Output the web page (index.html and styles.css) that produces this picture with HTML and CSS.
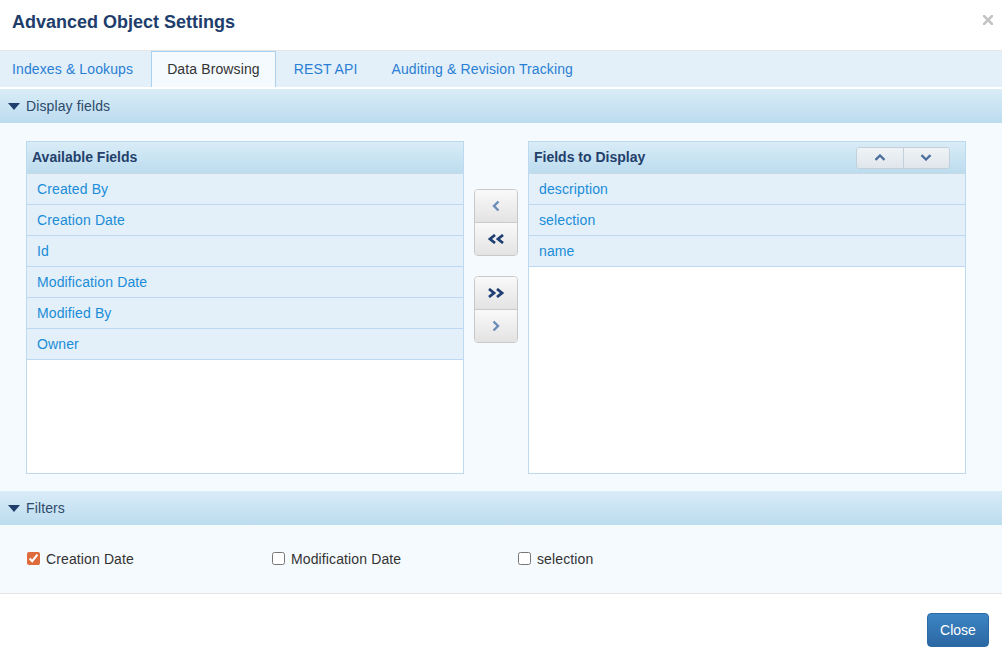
FILE: index.html
```html
<!DOCTYPE html>
<html>
<head>
<meta charset="utf-8">
<link rel="stylesheet" href="styles.css">
</head>
<body>
<div class="modal">
  <div class="modal-header">
    <h4 class="title">Advanced Object Settings</h4>
    <span class="close"><svg width="10" height="10" viewBox="0 0 10 10"><path d="M1 1L9 9M9 1L1 9" stroke="#c4c4c4" stroke-width="2.6" stroke-linecap="square"/></svg></span>
  </div>
  <ul class="tabs">
    <li class="tab">Indexes &amp; Lookups</li>
    <li class="tab active">Data Browsing</li>
    <li class="tab">REST API</li>
    <li class="tab">Auditing &amp; Revision Tracking</li>
  </ul>

  <div class="section-head">
    <svg class="caret" width="12" height="7" viewBox="0 0 12 7"><polygon points="0,0 12,0 6,7" fill="#1f3e6c"/></svg>
    <span>Display fields</span>
  </div>
  <div class="panel-body">
    <div class="listbox">
      <div class="list-head"><span>Available Fields</span></div>
      <div class="row">Created By</div>
      <div class="row">Creation Date</div>
      <div class="row">Id</div>
      <div class="row">Modification Date</div>
      <div class="row">Modified By</div>
      <div class="row">Owner</div>
    </div>
    <div class="movers">
      <div class="btn-group">
        <div class="mbtn"><svg width="8" height="12" viewBox="0 0 8 12"><path d="M6.5 1.5L2 6L6.5 10.5" fill="none" stroke="#6b8cb8" stroke-width="2.4"/></svg></div>
        <div class="mbtn"><svg width="18" height="10" viewBox="0 0 18 10"><path d="M8 1L3 5L8 9M16 1L11 5L16 9" fill="none" stroke="#1e3f72" stroke-width="2.8"/></svg></div>
      </div>
      <div class="btn-group">
        <div class="mbtn"><svg width="18" height="10" viewBox="0 0 18 10"><path d="M2 1L7 5L2 9M10 1L15 5L10 9" fill="none" stroke="#1e3f72" stroke-width="2.8"/></svg></div>
        <div class="mbtn"><svg width="8" height="12" viewBox="0 0 8 12"><path d="M1.5 1.5L6 6L1.5 10.5" fill="none" stroke="#6b8cb8" stroke-width="2.4"/></svg></div>
      </div>
    </div>
    <div class="listbox">
      <div class="list-head">
        <span>Fields to Display</span>
        <div class="updown">
          <div class="ubtn"><svg width="12" height="7" viewBox="0 0 12 7"><path d="M1.5 5.8L6 1.5L10.5 5.8" fill="none" stroke="#4b6e9c" stroke-width="2.3"/></svg></div>
          <div class="ubtn"><svg width="12" height="7" viewBox="0 0 12 7"><path d="M1.5 1.2L6 5.5L10.5 1.2" fill="none" stroke="#4b6e9c" stroke-width="2.3"/></svg></div>
        </div>
      </div>
      <div class="row">description</div>
      <div class="row">selection</div>
      <div class="row">name</div>
    </div>
  </div>

  <div class="section-head">
    <svg class="caret" width="12" height="7" viewBox="0 0 12 7"><polygon points="0,0 12,0 6,7" fill="#1f3e6c"/></svg>
    <span>Filters</span>
  </div>
  <div class="filters">
    <label class="check"><input type="checkbox" checked><span>Creation Date</span></label>
    <label class="check"><input type="checkbox"><span>Modification Date</span></label>
    <label class="check"><input type="checkbox"><span>selection</span></label>
  </div>

  <div class="modal-footer">
    <button class="btn-primary">Close</button>
  </div>
</div>
</body>
</html>
```

FILE: styles.css
```css
* { box-sizing: border-box; }
html, body {
  margin: 0;
  padding: 0;
  background: #fff;
}
body {
  width: 1002px;
  height: 661px;
  overflow: hidden;
  font-family: "Liberation Sans", Arial, sans-serif;
  font-size: 14px;
  letter-spacing: 0.12px;
  color: #333;
}
.modal-header {
  height: 51px;
  border-bottom: 1px solid #e5e5e5;
  display: flex;
  justify-content: space-between;
  align-items: flex-start;
  padding: 0 9px 0 12px;
}
.title {
  margin: 0;
  padding-top: 12px;
  font-size: 18px;
  line-height: 20px;
  font-weight: bold;
  letter-spacing: 0;
  color: #203d6b;
}
.close {
  margin-top: 15px;
  width: 10px;
  height: 10px;
  display: flex;
}
.tabs {
  list-style: none;
  margin: 0 0 2px;
  padding: 0;
  height: 36px;
  display: flex;
  background: #e3f0f9;
}
.tab {
  padding: 0 16px;
  line-height: 36px;
  color: #2a7fd4;
  margin-right: 2px;
  white-space: nowrap;
}
.tab:first-child { padding-left: 12px; }
.tab.active {
  background: #f5fafe;
  color: #333;
  border: 1px solid #a9d0ee;
  border-bottom: none;
  padding: 0 15px;
  line-height: 35px;
}
.section-head {
  height: 34px;
  display: flex;
  align-items: center;
  padding-left: 8px;
  background: linear-gradient(#d9ecf7, #bcdcef);
  color: #2d4a6b;
}
.caret { margin-right: 6px; }
.panel-body {
  background: #f5fafe;
  padding: 18px 36px 17px 26px;
  display: flex;
  gap: 10px;
}
.listbox {
  width: 438px;
  height: 333px;
  background: #fff;
  border: 1px solid #bdd9ef;
}
.list-head {
  height: 32px;
  display: flex;
  align-items: center;
  justify-content: space-between;
  padding-left: 5px;
  padding-bottom: 1px;
  background: linear-gradient(#d9ecf7, #bcdcef);
  border-bottom: 1px solid #c9d9e4;
  font-weight: bold;
  letter-spacing: 0;
  color: #23406b;
}
.row {
  height: 31px;
  line-height: 30px;
  padding-left: 10px;
  background: #e3f0f9;
  border-bottom: 1px solid #bcd8f2;
  color: #1a8cd8;
}
.movers {
  width: 44px;
  padding-top: 48px;
  display: flex;
  flex-direction: column;
  gap: 20px;
}
.btn-group {
  border: 1px solid #c8c8c8;
  border-radius: 4px;
  overflow: hidden;
}
.mbtn {
  height: 32px;
  display: flex;
  align-items: center;
  justify-content: center;
  background: linear-gradient(#f9f9f9, #e3e3e3);
}
.mbtn:first-child { border-bottom: 1px solid #cacaca; height: 33px; }
.updown {
  display: flex;
  margin-right: 15px;
  margin-top: 1px;
  width: 94px;
  height: 22px;
  border: 1px solid #c3d0da;
  border-radius: 3px;
  overflow: hidden;
}
.ubtn {
  flex: 1;
  display: flex;
  align-items: center;
  justify-content: center;
  background: linear-gradient(#eff3f6, #dfe6eb);
}
.ubtn:first-child { border-right: 1px solid #c3d0da; }
.filters {
  height: 68px;
  background: #f5fafe;
  display: grid;
  grid-template-columns: 245px 246px 1fr;
  align-items: center;
  padding-left: 27px;
  padding-bottom: 1px;
}
.check {
  display: flex;
  align-items: center;
  gap: 6px;
  color: #333;
}
.check input {
  margin: 0;
  width: 13px;
  height: 13px;
  accent-color: #dd6b3c;
}
.modal-footer {
  border-top: 1px solid #e5e5e5;
  height: 68px;
  display: flex;
  justify-content: flex-end;
  align-items: flex-start;
  padding: 19px 13px 0 0;
}
.btn-primary {
  width: 62px;
  height: 34px;
  border: 1px solid #2b6aa5;
  border-radius: 4px;
  background: linear-gradient(#3d85c4, #2a67a3);
  color: #fff;
  font-family: "Liberation Sans", Arial, sans-serif;
  font-size: 14px;
  padding: 0;
}
```
